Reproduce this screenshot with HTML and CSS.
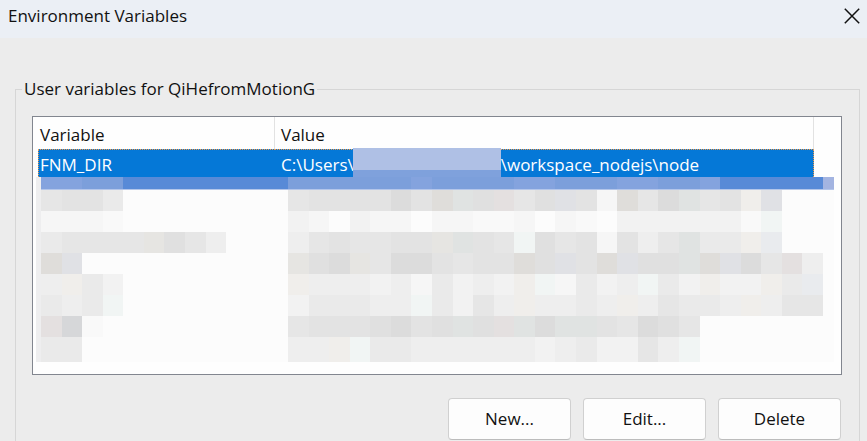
FILE: index.html
```html
<!DOCTYPE html>
<html lang="en">
<head>
<meta charset="utf-8">
<title>Environment Variables</title>
<link rel="stylesheet" href="styles.css">
</head>
<body>
<header class="titlebar">
  <h1 class="title">Environment Variables</h1>
  <button class="close" type="button" aria-label="Close">
    <svg width="16" height="16" viewBox="0 0 16 16" aria-hidden="true"><path d="M.8 .8 15.2 15.2M15.2 .8 .8 15.2" fill="none" stroke="#111" stroke-width="1.5"/></svg>
  </button>
</header>
<main class="content">
  <fieldset class="group">
    <legend>User variables for QiHefromMotionG</legend>
    <div class="listbox">
      <table class="vars">
        <thead>
          <tr><th class="name" scope="col">Variable</th><th scope="col">Value</th></tr>
        </thead>
        <tbody>
          <tr class="selected">
            <td>FNM_DIR</td>
            <td><span class="value"><span>C:\Users\</span><span class="redacted"></span><span>\workspace_nodejs\node</span></span></td>
          </tr>
        </tbody>
      </table>
      <svg class="mosaic" viewBox="0 0 798 185" preserveAspectRatio="none" shape-rendering="crispEdges" aria-hidden="true"></svg>
    </div>
    <div class="actions">
      <button type="button">New...</button>
      <button type="button">Edit...</button>
      <button type="button">Delete</button>
    </div>
  </fieldset>
</main>
<script src="mosaic.js"></script>
</body>
</html>
```
FILE: styles.css
```css
* {
  box-sizing: border-box;
}

body {
  margin: 0;
  background: #ececec;
  color: #111;
  font: 17px/24px "Open Sans", "Noto Sans", sans-serif;
}

button {
  font: inherit;
  color: inherit;
}

.titlebar {
  display: flex;
  align-items: center;
  justify-content: space-between;
  height: 38px;
  padding: 0 7px 6px 8px;
  background: #ebeff5;
}

.title {
  margin: 0;
  font-size: 17px;
  font-weight: 400;
}

.close {
  display: flex;
  padding: 0;
  border: 0;
  background: none;
}

.content {
  padding: 39px 7px 0 15px;
}

.group {
  min-width: 0;
  margin: 0;
  padding: 15px 17px 1px 16px;
  border: 1px solid #d6d6d6;
  border-bottom: 0;
}

.group legend {
  margin-left: -10px;
  padding: 0 2px;
}

.listbox {
  padding: 0 7px 12px 3px;
  border: 1px solid #82868f;
  background: #fefefe;
}

.vars {
  width: calc(100% - 22px);
  margin-left: 2px;
  border-collapse: separate;
  border-spacing: 0;
  table-layout: fixed;
}

.vars th,
.vars td {
  padding: 0 0 0 2px;
  text-align: left;
  font-weight: 400;
}

.vars th {
  height: 32px;
  padding-top: 3px;
  border-right: 1px solid #e2e2e2;
}

.vars th + th,
.vars td + td {
  padding-left: 6px;
}

.vars .name {
  width: 237px;
}

.vars td {
  height: 28px;
  padding-top: 2px;
  border-top: 1px dotted #f09a4a;
  background: #0578d7;
  color: #fff;
}

.vars td:first-child {
  padding-left: 1px;
  border-left: 1px dotted #f09a4a;
}

.vars td:last-child {
  border-right: 1px dotted #f09a4a;
}

.value {
  display: flex;
  align-items: center;
}

.redacted {
  width: 148px;
  height: 30px;
  margin: -5px 0 -2px -1px;
  background: linear-gradient(#afc0e5 22px, #7fa1dc 22px);
}

.mosaic {
  display: block;
  width: 100%;
  height: 185px;
}

.actions {
  display: flex;
  justify-content: flex-end;
  gap: 12px;
  margin-top: 23px;
  padding-right: 1px;
}

.actions button {
  width: 123px;
  height: 42px;
  padding: 0;
  border: 1px solid #d0d0d0;
  border-bottom-color: #bcbcbc;
  border-radius: 4px;
  background: #fdfdfd;
}
```
FILE: mosaic.js
```js
// Each character is one mosaic cell; "." leaves the cell blank.
const palette = {
  0: "#d6d7d9", 1: "#dcdcdc", 2: "#e0e0e0", 3: "#e3e3e3", 4: "#e6e6e6",
  5: "#eaeaea", 6: "#eeeeee", 7: "#f2f2f2", 8: "#f6f6f6", 9: "#f9f9f9",
  w: "#dfddda", u: "#e6e5e2", b: "#e0e1e5", g: "#e0e3e2", p: "#e4e0e0",
  W: "#f0eeeb", G: "#f1f5f4", B: "#e9ebee", ".": "#fcfcfc",
  x: "#84a3de", y: "#7c9fdb", z: "#588ad7"
};
const rows = [
  "4335........4333313wg2p42b38w41g43Wb..",
  "8889........78.788.88998.89.7777779G..",
  "54444u246...6434433ug34G2438364g55WB..",
  "wb..........u21u4113433w2b3wb22gwb14p6",
  "6W57........W6667685767WG8576G57W77W5B",
  "565G........755566G5746W6656W64556W644",
  "p09.........43332132g2pg1gg34124......",
  "55..........66WG556666667657746G......"
];
const band = "xxyyzzzzzzzzyyyyyyxyyyyxxyyyxxyyxzzzzz";
const svg = document.querySelector(".mosaic");
const cell = 782 / 38;

function rect(x, y, width, height, fill) {
  const r = document.createElementNS("http://www.w3.org/2000/svg", "rect");
  Object.entries({ x, y, width, height, fill }).forEach(([k, v]) => r.setAttribute(k, v));
  svg.append(r);
}

rect(0, 0, 798, 185, "#fcfcfc");
rect(0, 0, 5, 185, "#eeeeef");
[...band].forEach((c, i) => rect(5 + i * cell, 0, cell, 13, palette[c]));
rect(787, 0, 11, 13, "#a3b4e1");
rect(5, 12, 793, 1, "#b4c6ea");
rows.forEach((row, r) => {
  const height = r === 7 ? 25 : 21;
  [...row].forEach((c, i) => rect(5 + i * cell, 13 + r * 21, cell, height, palette[c]));
});
```
